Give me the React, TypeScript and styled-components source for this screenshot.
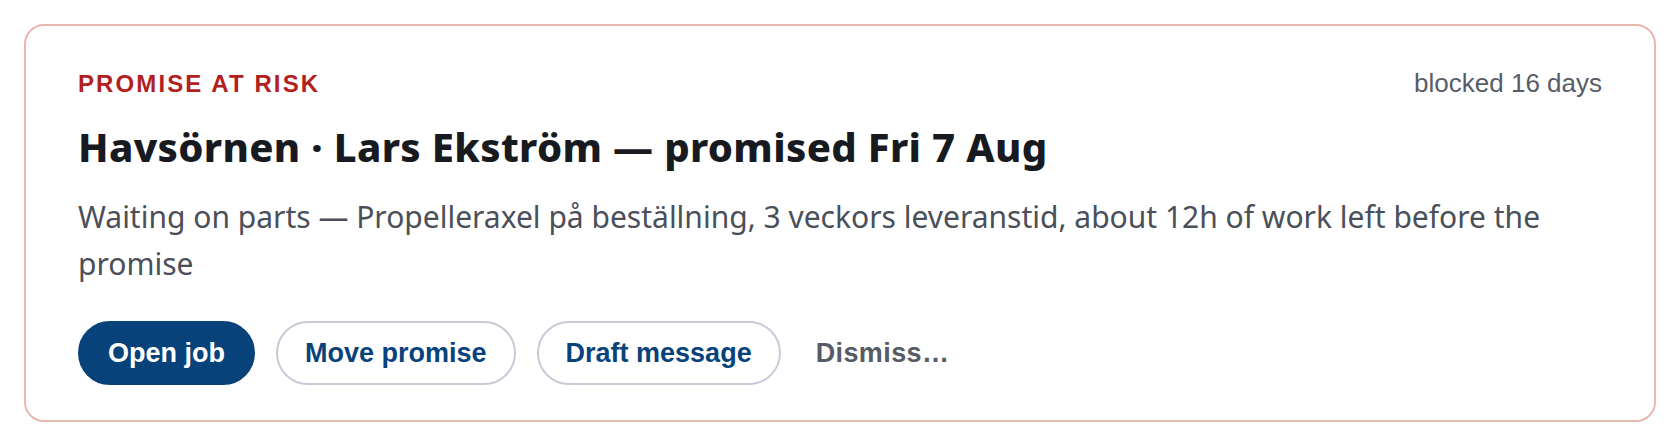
import React from 'react';
import styled, { createGlobalStyle } from 'styled-components';

const GlobalStyle = createGlobalStyle`
  html, body {
    margin: 0;
    padding: 0;
    background: #ffffff;
  }
  body {
    padding: 24px;
    font-family: "Noto Sans", "Open Sans", sans-serif;
    line-height: 1.5;
  }
`;

const Card = styled.section`
  border: 2px solid #e8b8b1;
  border-radius: 20px;
  padding: 38px 52px 35px;
  background: #fff;
`;

const Header = styled.div`
  display: flex;
  justify-content: space-between;
  align-items: baseline;
`;

const Eyebrow = styled.span`
  font-family: "Liberation Sans", Arial, sans-serif;
  font-size: 24px;
  line-height: 36px;
  font-weight: 700;
  letter-spacing: 2.1px;
  text-transform: uppercase;
  color: #b3201e;
`;

const Age = styled.span`
  font-family: "Liberation Sans", Arial, sans-serif;
  font-size: 26px;
  line-height: 39px;
  color: #565c68;
`;

const Title = styled.h2`
  margin: 18px 0 0;
  font-family: "Noto Sans", sans-serif;
  font-size: 40px;
  line-height: 52px;
  font-weight: 800;
  letter-spacing: 0.35px;
  color: #171a1f;
`;

const Detail = styled.p`
  margin: 21px 0 0;
  font-size: 30px;
  line-height: 46.5px;
  color: #4a4f59;
`;

const Actions = styled.div`
  display: flex;
  align-items: center;
  gap: 21px;
  margin-top: 34px;
`;

type Variant = 'primary' | 'outline' | 'ghost';

const padFor = (v: Variant) => (v === 'ghost' ? '12px' : v === 'outline' ? '27px' : '28px');

const Button = styled.button<{ $variant: Variant }>`
  height: 64px;
  padding: 0 ${p => padFor(p.$variant)};
  border-radius: 999px;
  font-family: "Liberation Sans", Arial, sans-serif;
  font-size: 27px;
  font-weight: 700;
  letter-spacing: ${p => (p.$variant === 'ghost' ? '0.4px' : '0')};
  cursor: pointer;
  border: 2px solid
    ${p =>
      p.$variant === 'primary' ? '#07427a' : p.$variant === 'outline' ? '#c9cad8' : 'transparent'};
  background: ${p => (p.$variant === 'primary' ? '#07427a' : 'transparent')};
  color: ${p =>
    p.$variant === 'primary' ? '#ffffff' : p.$variant === 'outline' ? '#07427a' : '#565b66'};
`;

const App = () => {
  return (
    <>
      <GlobalStyle />
      <Card>
        <Header>
          <Eyebrow>Promise at risk</Eyebrow>
          <Age>blocked 16 days</Age>
        </Header>
        <Title>Havsörnen · Lars Ekström — promised Fri 7 Aug</Title>
        <Detail>
          Waiting on parts — Propelleraxel på beställning, 3 veckors leveranstid, about 12h of work
          left before the promise
        </Detail>
        <Actions>
          <Button $variant="primary">Open job</Button>
          <Button $variant="outline">Move promise</Button>
          <Button $variant="outline">Draft message</Button>
          <Button $variant="ghost">Dismiss…</Button>
        </Actions>
      </Card>
    </>
  );
};

export default App;
